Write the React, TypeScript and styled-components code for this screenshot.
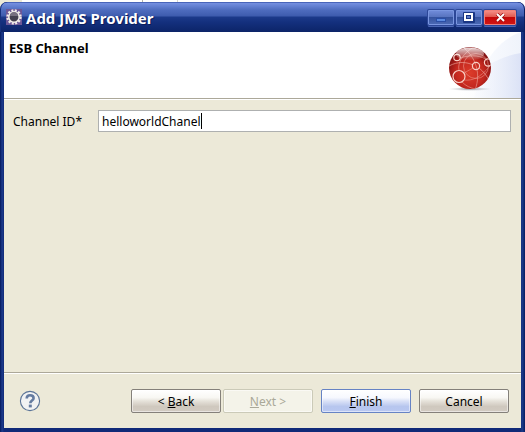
import React, { useState } from "react";
import styled, { createGlobalStyle, css } from "styled-components";

const GlobalStyle = createGlobalStyle`
  *, *::before, *::after { box-sizing: border-box; }
  body {
    margin: 0;
    font-family: "Noto Sans", "DejaVu Sans", sans-serif;
    font-size: 12px;
    line-height: 16px;
    color: #000;
    background: #fff;
  }
`;

const Desktop = styled.div`
  display: flex;
  min-height: 100vh;
  padding-top: 2px;
  background:
    linear-gradient(#ece9d8, #ece9d8) 0 0 / 22px 8px no-repeat,
    linear-gradient(#b4b2a8, #b4b2a8) 142px 0 / 1px 2px no-repeat,
    linear-gradient(#d8d6cc, #d8d6cc) 177px 0 / 1px 2px no-repeat,
    #fff;
`;

const Window = styled.section`
  flex: 1;
  display: flex;
  flex-direction: column;
  padding: 0 4px 4px;
  border-radius: 7px 7px 0 0;
  overflow: hidden;
  background: linear-gradient(90deg, #071a5c 0, #0d2772 1px, #1e3c8c 2px, #102a78 4px, #102a78 calc(100% - 4px), #1e3c8c calc(100% - 3px), #0d2772 calc(100% - 1px), #071a5c 100%);
`;

const TitleBar = styled.header`
  display: flex;
  align-items: center;
  height: 30px;
  flex: none;
  margin: 0 -4px;
  padding: 0 9px 0 6px;
  gap: 4px;
  border-radius: 7px 7px 0 0;
  background: linear-gradient(#1c3a94 0, #7690e0 1px, #6a86d8 3px, #4e6cbe 8px, #3e5cae 14px, #1c3a8a 15px, #14307e 20px, #0c2468 30px);
  box-shadow: inset 1px 0 #16307c, inset -1px 0 #0a1e60;
`;

const Title = styled.h1`
  flex: 1;
  margin: 0;
  padding-top: 2px;
  font: bold 15px/20px "Noto Sans", sans-serif;
  color: #fff;
  text-shadow: 1px 1px #0a1c5c;
`;

const WindowControls = styled.div`
  display: flex;
  gap: 2px;
`;

const ControlButton = styled.button<{ $danger?: boolean }>`
  width: ${(p) => (p.$danger ? 32 : 26)}px;
  height: 15px;
  padding: 0;
  display: grid;
  place-items: center;
  border: 1px solid ${(p) => (p.$danger ? "#f08078" : "#7a96e0")};
  border-radius: 1px;
  box-shadow: 0 0 0 1px #2c4798, 0 2px #4a66b4;
  background: ${(p) =>
    p.$danger
      ? "linear-gradient(#f48c84 0, #e05a50 45%, #c40808 50%, #d01414 100%)"
      : "linear-gradient(#6f8ad8 0, #5874c0 45%, #35539f 50%, #4a68b4 100%)"};
  svg { display: block; }
`;

const Banner = styled.div`
  display: flex;
  justify-content: space-between;
  height: 66px;
  flex: none;
  padding-left: 5px;
  background: #fff;
`;

const Heading = styled.h2`
  margin: 8px 0 0;
  font: bold 13px/16px "Noto Sans", sans-serif;
`;

const Separator = styled.hr`
  flex: none;
  width: 100%;
  height: 2px;
  margin: 0;
  border: 0;
  border-top: 1px solid #aca899;
  background: #fff;
`;

const Dialog = styled.form`
  flex: 1;
  display: flex;
  flex-direction: column;
  background: #ece9d8;
`;

const Content = styled.div`
  flex: 1;
  padding: 10px 10px 0 9px;
`;

const Row = styled.div`
  display: flex;
  align-items: center;
`;

const Label = styled.label`
  width: 85px;
  flex: none;
  padding-top: 2px;
`;

const Field = styled.div`
  flex: 1;
  display: flex;
  align-items: center;
  min-width: 0;
  height: 22px;
  padding: 0 3px;
  border: 1px solid #aeb0b0;
  background: #fff;
  cursor: text;
`;

const TextInput = styled.input`
  field-sizing: content;
  min-width: 1px;
  max-width: 100%;
  padding: 2px 0 0;
  border: 0;
  outline: 0;
  background: none;
  color: #000;
  caret-color: transparent;
  font: inherit;
`;

const Caret = styled.span`
  width: 1px;
  height: 16px;
  background: #000;
`;

const Footer = styled.footer`
  display: flex;
  align-items: center;
  justify-content: space-between;
  height: 54px;
  padding: 0 12px 0 15px;
`;

const HelpButton = styled.button`
  display: block;
  width: 22px;
  height: 22px;
  padding: 0;
  border: 0;
  background: none;
  svg { display: block; }
`;

const Actions = styled.div`
  display: flex;
  gap: 8px;
`;

const Steps = styled.div`
  display: flex;
  gap: 2px;
`;

const PushButton = styled.button<{ $primary?: boolean }>`
  width: 90px;
  height: 24px;
  padding: 1px 0 0;
  border: 1px solid #84807a;
  border-radius: 2px;
  font: inherit;
  color: #000;
  background: linear-gradient(#fff 0, #f8f7f3 35%, #e6e2da 50%, #cfc8be 75%, #d2cbc2 100%);
  box-shadow: inset 0 0 0 1px rgba(255, 255, 255, 0.5);
  ${(p) =>
    p.$primary &&
    css`
      border-color: #6683c4;
      background: linear-gradient(#fff 0, #f6f8fe 35%, #dbe2f7 50%, #b7c6ee 75%, #b9c8f2 100%);
    `}
  &:disabled {
    color: #aaa898;
    border-color: #cbcab8;
    background: #f4f3e9;
  }
`;

const GearIcon = () => (
  <svg width="16" height="16" viewBox="0 0 16 16" aria-hidden="true">
    <rect width="16" height="16" fill="#6b5797" />
    <circle cx="8" cy="8" r="6.5" fill="none" stroke="#eeeae6" strokeWidth="2.4" strokeDasharray="2 1.4" />
    <circle cx="8" cy="8" r="5.2" fill="#44414f" stroke="#f4f1ec" strokeWidth="1.5" />
    <path d="M4 7a4 4 0 0 1 8 0z" fill="#77717f" />
  </svg>
);

const MinimizeIcon = () => (
  <svg width="12" height="9" viewBox="0 0 12 9" aria-hidden="true">
    <rect x="1.5" y="5.5" width="9" height="3" fill="#5c8ae0" stroke="#2a4ea6" />
  </svg>
);

const MaximizeIcon = () => (
  <svg width="12" height="11" viewBox="0 0 12 11" aria-hidden="true">
    <rect width="12" height="11" rx="1" fill="#1a3684" />
    <path d="M1 1h9v8H1zM3 3v4h5V3z" fill="#fff" fillRule="evenodd" />
    <rect x="4" y="4" width="3" height="2" fill="#5e7cc8" />
  </svg>
);

const CloseIcon = () => (
  <svg width="11" height="9" viewBox="0 0 11 9" aria-hidden="true">
    <path d="M2 1l7 7M9 1L2 8" stroke="#9c1010" strokeWidth="3.4" />
    <path d="M2 1l7 7M9 1L2 8" stroke="#fff" strokeWidth="1.9" />
  </svg>
);

const HelpIcon = () => (
  <svg width="22" height="22" viewBox="0 0 22 22" aria-hidden="true">
    <circle cx="11" cy="11" r="9.6" fill="#f1f2f3" stroke="#5a7397" strokeWidth="1.1" />
    <path d="M7.7 8.6C7.7 6.2 9 5.3 11 5.3s3.6 1 3.6 2.9c0 2.3-3.3 2.4-3.3 5" fill="none" stroke="#647ba0" strokeWidth="2.6" />
    <rect x="9.8" y="14.6" width="3" height="2.8" fill="#647ba0" />
  </svg>
);

const ChannelArt = () => (
  <svg width="91" height="66" viewBox="0 0 91 66" aria-hidden="true">
    <defs>
      <linearGradient id="sweep" x1="0" x2="1">
        <stop offset="0" stopColor="#fff" stopOpacity="0" />
        <stop offset="1" stopColor="#dbe2f6" />
      </linearGradient>
      <linearGradient id="arc" x1="0" x2="1">
        <stop offset="0" stopColor="#fcfdff" />
        <stop offset="1" stopColor="#eff3fb" />
      </linearGradient>
      <radialGradient id="ball" cx=".5" cy=".62" r=".56">
        <stop offset="0" stopColor="#dc3c2a" />
        <stop offset=".6" stopColor="#c4281f" />
        <stop offset="1" stopColor="#841212" />
      </radialGradient>
      <linearGradient id="gloss" x1="0" y1="0" x2="0" y2="1">
        <stop offset="0" stopColor="#fff" stopOpacity=".85" />
        <stop offset="1" stopColor="#fff" stopOpacity="0" />
      </linearGradient>
      <radialGradient id="shade">
        <stop offset="0" stopColor="#8a8a90" />
        <stop offset="1" stopColor="#c8c8d0" stopOpacity="0" />
      </radialGradient>
      <clipPath id="disc">
        <circle cx="40" cy="36" r="21" />
      </clipPath>
    </defs>
    <path d="M91 0C74 6 60 20 52 40L44 66H91z" fill="url(#arc)" />
    <path d="M91 21C72 24 56 32 44 46L24 66H91z" fill="url(#sweep)" />
    <ellipse cx="40" cy="57" rx="22" ry="2" fill="url(#shade)" />
    <circle cx="40" cy="36" r="21" fill="url(#ball)" />
    <g clipPath="url(#disc)" fill="none" stroke="#eea498" strokeWidth=".9">
      <circle cx="46" cy="34" r="12.500" opacity=".6" />
      <path d="M34 16C44 24 52 40 45 58" opacity=".7" />
      <path d="M19 34C28 29 37 30 43 33M49 36C54 40 57 44 60 50" opacity=".75" />
      <path d="M29 38C27 31 34 20 44 15M32 50C36 54 40 56 46 57M30 26C42 22 52 24 57 28" opacity=".65" />
      <path d="M34 41L43 36M34 48C42 49 50 46 60 34" opacity=".55" />
      <g stroke="#f8cfc6" strokeWidth="1.2">
        <circle cx="46" cy="34" r="3.600" />
        <circle cx="29" cy="44.500" r="6" />
        <circle cx="27" cy="25.500" r="3.200" />
        <circle cx="58" cy="30.500" r="3.600" />
      </g>
    </g>
    <ellipse cx="40" cy="22" rx="14" ry="6.500" fill="url(#gloss)" />
  </svg>
);

export default function App() {
  const [channel, setChannel] = useState("helloworldChanel");
  return (
    <>
      <GlobalStyle />
      <Desktop>
        <Window aria-labelledby="window-title">
          <TitleBar>
            <GearIcon />
            <Title id="window-title">Add JMS Provider</Title>
            <WindowControls>
              <ControlButton type="button" aria-label="Minimize"><MinimizeIcon /></ControlButton>
              <ControlButton type="button" aria-label="Maximize"><MaximizeIcon /></ControlButton>
              <ControlButton type="button" aria-label="Close" $danger><CloseIcon /></ControlButton>
            </WindowControls>
          </TitleBar>
          <Banner>
            <Heading>ESB Channel</Heading>
            <ChannelArt />
          </Banner>
          <Dialog onSubmit={(e) => e.preventDefault()}>
            <Separator />
            <Content>
              <Row>
                <Label htmlFor="channel-id">Channel ID*</Label>
                <Field>
                  <TextInput id="channel-id" value={channel} spellCheck={false} onChange={(e) => setChannel(e.target.value)} />
                  <Caret />
                </Field>
              </Row>
            </Content>
            <Separator />
            <Footer>
              <HelpButton type="button" aria-label="Help"><HelpIcon /></HelpButton>
              <Actions>
                <Steps>
                  <PushButton type="button">&lt; <u>B</u>ack</PushButton>
                  <PushButton type="button" disabled><u>N</u>ext &gt;</PushButton>
                </Steps>
                <PushButton type="submit" $primary><u>F</u>inish</PushButton>
                <PushButton type="button">Cancel</PushButton>
              </Actions>
            </Footer>
          </Dialog>
        </Window>
      </Desktop>
    </>
  );
}
